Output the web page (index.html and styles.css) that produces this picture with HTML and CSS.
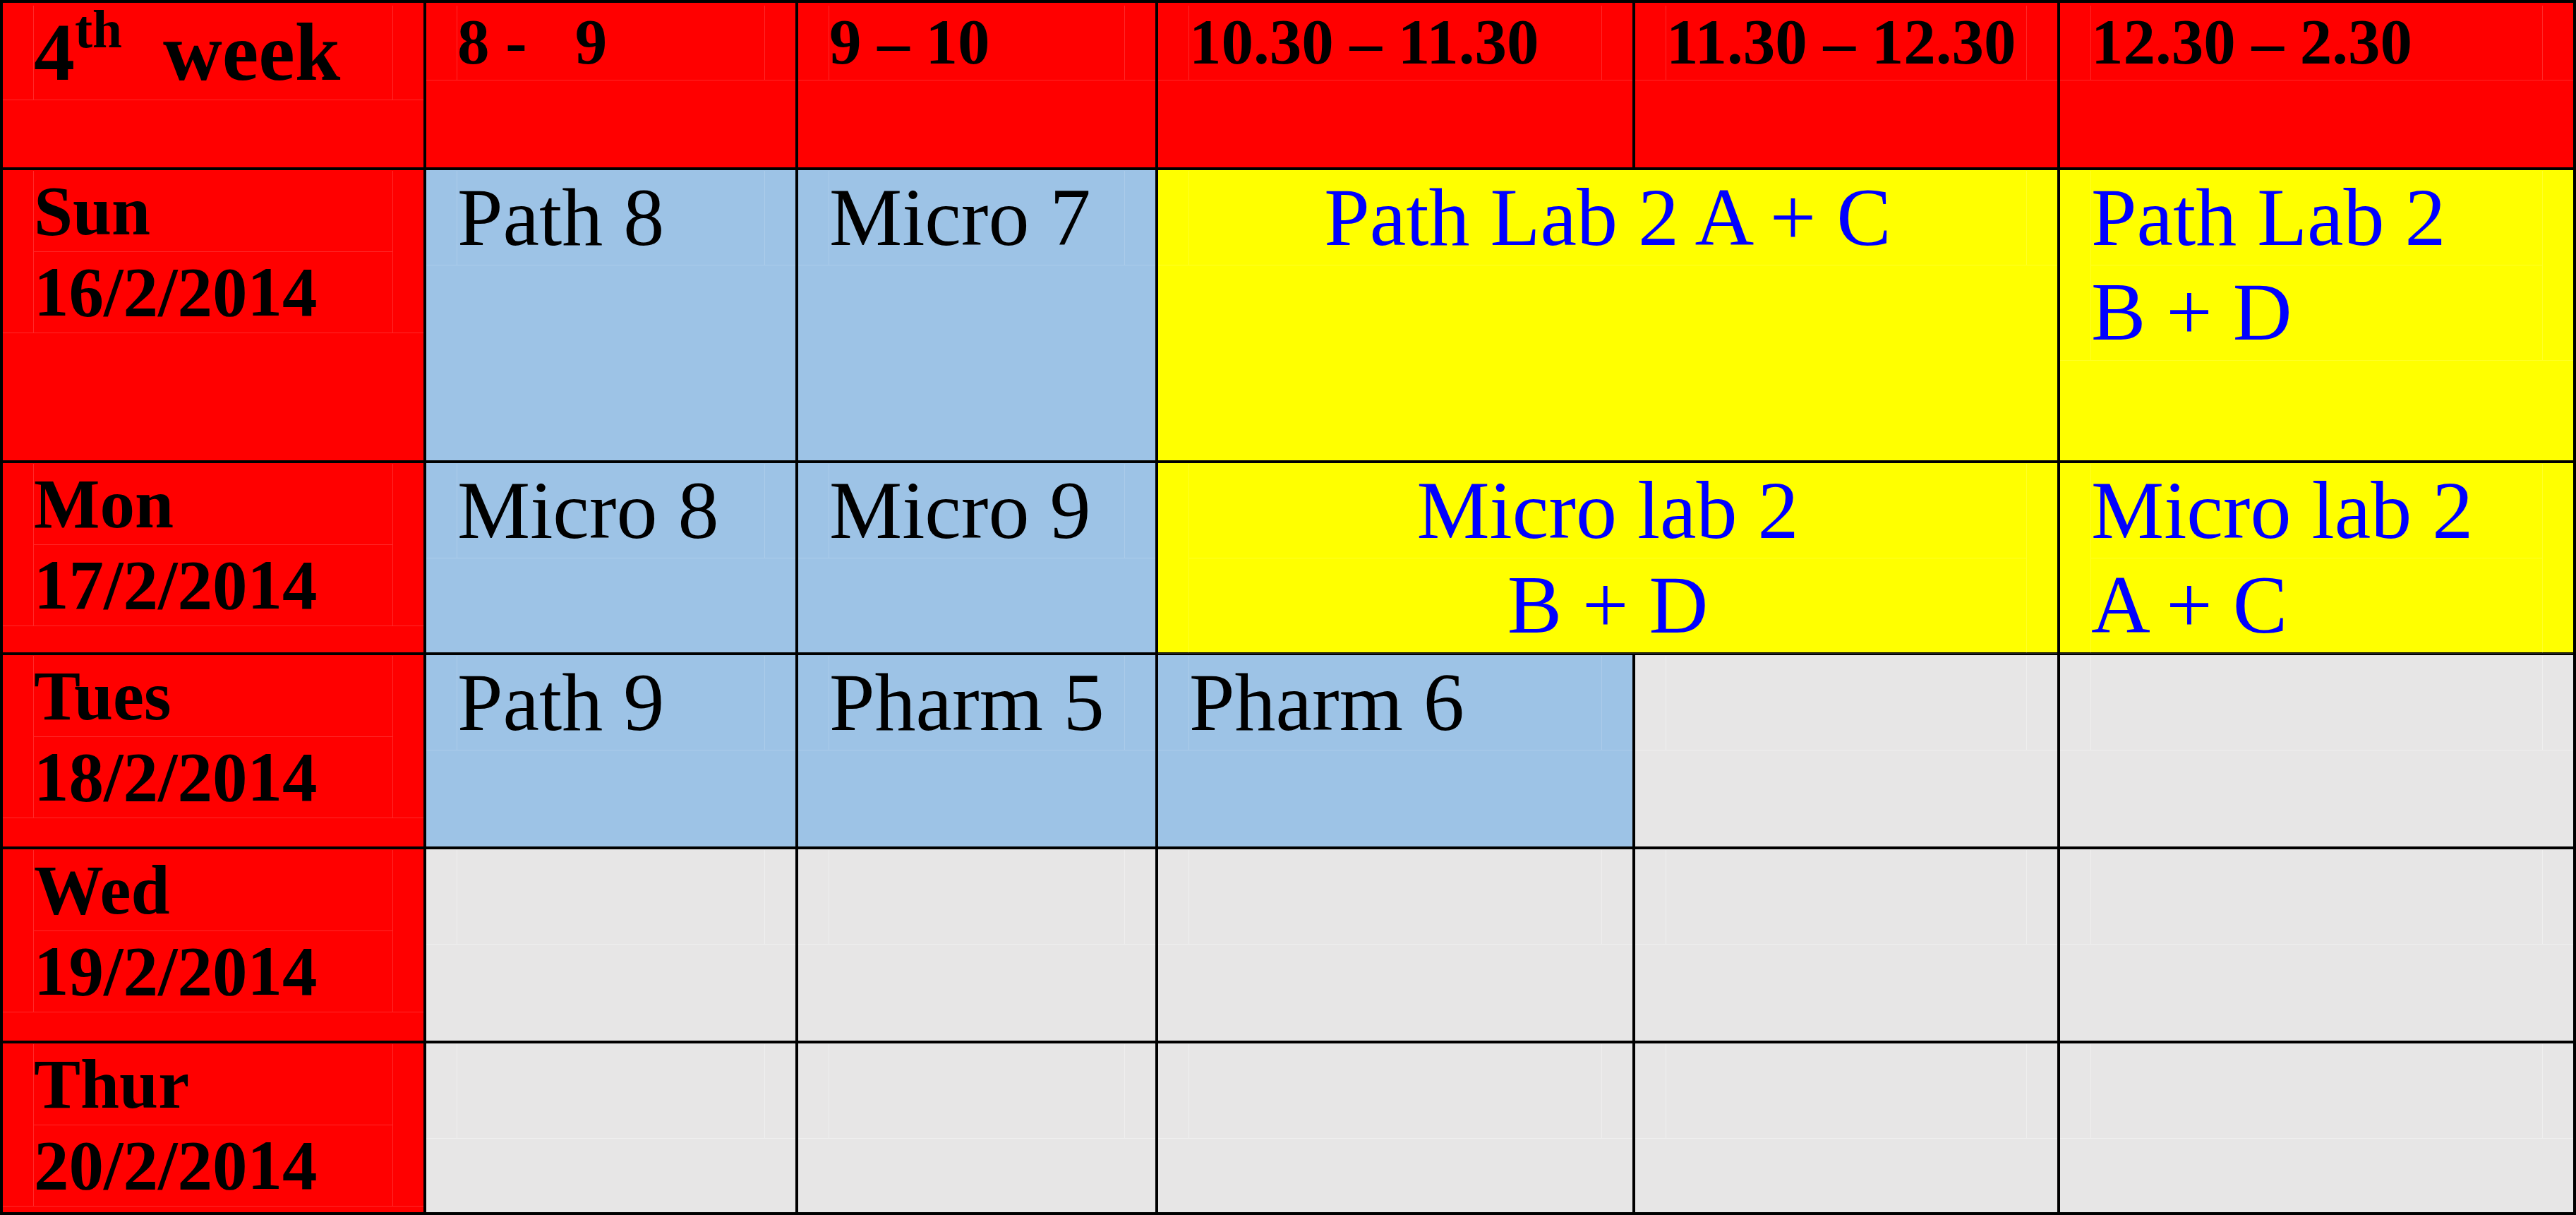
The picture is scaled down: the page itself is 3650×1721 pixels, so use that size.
FILE: index.html
```html
<!DOCTYPE html>
<html lang="en">
<head>
<meta charset="utf-8">
<title>4th week timetable</title>
<link rel="stylesheet" href="styles.css">
</head>
<body>
<div class="sheet">
  <!-- header row -->
  <div class="cell red head"><div class="blk"><p class="week">4<sup>th</sup>&nbsp; week</p></div></div>
  <div class="cell red head"><div class="blk"><p class="time">8 -&nbsp;&nbsp; 9</p></div></div>
  <div class="cell red head"><div class="blk"><p class="time">9 – 10</p></div></div>
  <div class="cell red head"><div class="blk"><p class="time">10.30 – 11.30</p></div></div>
  <div class="cell red head"><div class="blk"><p class="time">11.30 – 12.30</p></div></div>
  <div class="cell red head"><div class="blk"><p class="time">12.30 – 2.30</p></div></div>

  <!-- Sun -->
  <div class="cell red day"><div class="blk"><p>Sun</p><p>16/2/2014</p></div></div>
  <div class="cell blue"><div class="blk"><p>Path 8</p></div></div>
  <div class="cell blue"><div class="blk"><p>Micro 7</p></div></div>
  <div class="cell yellow span2 center"><div class="blk"><p>Path Lab 2 A + C</p></div></div>
  <div class="cell yellow"><div class="blk"><p>Path Lab 2</p><p>B + D</p></div></div>

  <!-- Mon -->
  <div class="cell red day"><div class="blk"><p>Mon</p><p>17/2/2014</p></div></div>
  <div class="cell blue"><div class="blk"><p>Micro 8</p></div></div>
  <div class="cell blue"><div class="blk"><p>Micro 9</p></div></div>
  <div class="cell yellow span2 center"><div class="blk"><p>Micro lab 2</p><p>B + D</p></div></div>
  <div class="cell yellow"><div class="blk"><p>Micro lab 2</p><p>A + C</p></div></div>

  <!-- Tues -->
  <div class="cell red day"><div class="blk"><p>Tues</p><p>18/2/2014</p></div></div>
  <div class="cell blue"><div class="blk"><p>Path 9</p></div></div>
  <div class="cell blue"><div class="blk"><p>Pharm 5</p></div></div>
  <div class="cell blue"><div class="blk"><p>Pharm 6</p></div></div>
  <div class="cell grey"><div class="blk"><p>&nbsp;</p></div></div>
  <div class="cell grey"><div class="blk"><p>&nbsp;</p></div></div>

  <!-- Wed -->
  <div class="cell red day"><div class="blk"><p>Wed</p><p>19/2/2014</p></div></div>
  <div class="cell grey"><div class="blk"><p>&nbsp;</p></div></div>
  <div class="cell grey"><div class="blk"><p>&nbsp;</p></div></div>
  <div class="cell grey"><div class="blk"><p>&nbsp;</p></div></div>
  <div class="cell grey"><div class="blk"><p>&nbsp;</p></div></div>
  <div class="cell grey"><div class="blk"><p>&nbsp;</p></div></div>

  <!-- Thur -->
  <div class="cell red day"><div class="blk"><p>Thur</p><p>20/2/2014</p></div></div>
  <div class="cell grey"><div class="blk"><p>&nbsp;</p></div></div>
  <div class="cell grey"><div class="blk"><p>&nbsp;</p></div></div>
  <div class="cell grey"><div class="blk"><p>&nbsp;</p></div></div>
  <div class="cell grey"><div class="blk"><p>&nbsp;</p></div></div>
  <div class="cell grey"><div class="blk"><p>&nbsp;</p></div></div>
</div>
</body>
</html>
```

FILE: styles.css
```css
html, body {
  margin: 0;
  padding: 0;
  background: #ffffff;
}

.sheet {
  display: grid;
  box-sizing: border-box;
  width: 3650px;
  height: 1721px;
  padding: 4px;
  background: #000000;
  column-gap: 4px;
  row-gap: 4px;
  grid-template-columns: 596px 523px 506px 672px 598px 727px;
  grid-template-rows: 233px 411px 268px 271px 271px 239px;
  font-family: "Liberation Serif", "Times New Roman", serif;
  font-size: 116px;
  line-height: 1.15;
  color: #000000;
}

.cell {
  --seam: rgba(255, 255, 255, 0.16);
  padding-top: 1px;
  min-width: 0;
}

.blk {
  padding: 0 43px;
  border-bottom: 1px solid var(--seam);
}

.blk p {
  margin: 0;
  border-left: 1px solid var(--seam);
  border-right: 1px solid var(--seam);
  white-space: nowrap;
}

.blk p + p {
  border-top: 1px solid var(--seam);
}

.red { background: #ff0000; }
.blue { background: #9dc3e6; }
.yellow { background: #ffff00; color: #0000ff; }
.grey { background: #e7e6e6; --seam: rgba(255, 255, 255, 0.35); }

.span2 { grid-column: span 2; }
.center { text-align: center; }

.head {
  padding-top: 4px;
  font-weight: bold;
}

.head .time {
  font-size: 91px;
}

.head .week {
  font-size: 116px;
}

.week sup {
  font-size: 0.65em;
  line-height: 1;
  vertical-align: baseline;
  position: relative;
  top: -46px;
}

.day {
  font-weight: bold;
  font-size: 99px;
  padding-top: 1px;
}
```
